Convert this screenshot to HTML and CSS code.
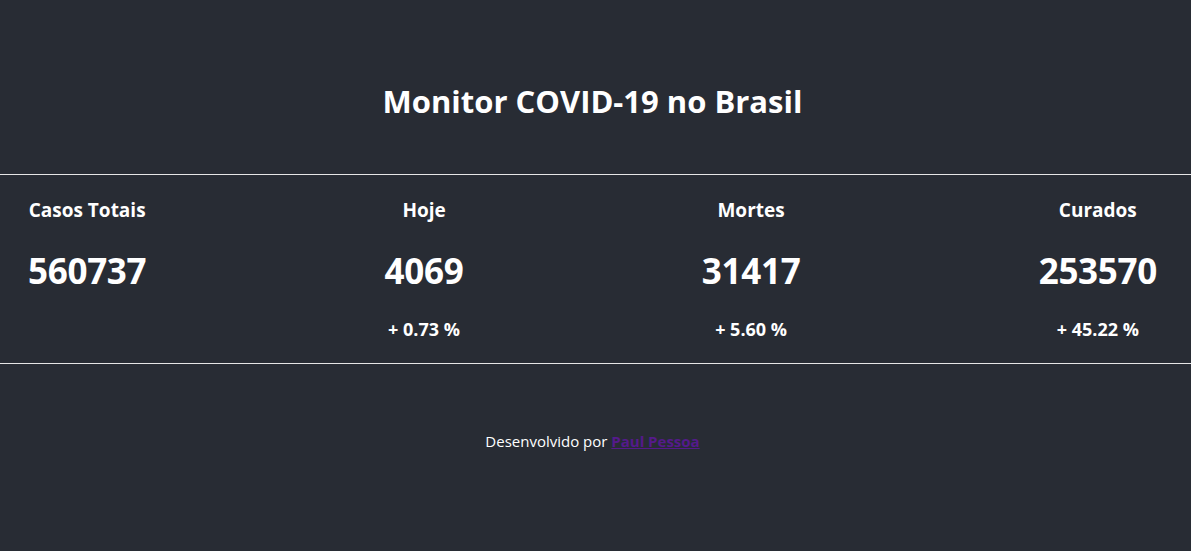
FILE: index.html
```html
<!DOCTYPE html>
<html lang="pt-BR">
<head>
<meta charset="utf-8">
<title>Monitor COVID-19 no Brasil</title>
<link rel="stylesheet" href="styles.css">
</head>
<body>
<div class="app">
  <header class="header">
    <h1 class="title">Monitor COVID-19 no Brasil</h1>
  </header>
  <div class="rule"></div>
  <section class="stats">
    <div class="stat">
      <h3 class="stat-label">Casos Totais</h3>
      <div class="stat-value">560737</div>
    </div>
    <div class="stat">
      <h3 class="stat-label">Hoje</h3>
      <div class="stat-value">4069</div>
      <div class="stat-pct">+ 0.73 %</div>
    </div>
    <div class="stat">
      <h3 class="stat-label">Mortes</h3>
      <div class="stat-value">31417</div>
      <div class="stat-pct">+ 5.60 %</div>
    </div>
    <div class="stat">
      <h3 class="stat-label">Curados</h3>
      <div class="stat-value">253570</div>
      <div class="stat-pct">+ 45.22 %</div>
    </div>
  </section>
  <div class="rule"></div>
  <footer class="footer">
    <p>Desenvolvido por <a href="#" class="link">Paul Pessoa</a></p>
  </footer>
</div>
</body>
</html>
```

FILE: styles.css
```css
html, body {
  margin: 0;
  padding: 0;
  background: #282c34;
  color: #ffffff;
  font-family: "Open Sans", "Noto Sans", sans-serif;
}

.app {
  min-height: 551px;
  display: flex;
  flex-direction: column;
}

.header {
  padding: 80px 6px 51px 0;
  text-align: center;
}

.title {
  margin: 0;
  font-size: 31px;
  line-height: 43px;
  font-weight: 700;
  letter-spacing: 0;
}

.rule {
  height: 1px;
  background: #e6e6e6;
}

.stats {
  display: flex;
  justify-content: space-between;
  align-items: flex-start;
  padding: 21px 34px 22px 28px;
}

.stat {
  display: flex;
  flex-direction: column;
  align-items: center;
  text-align: center;
}

.stat-label {
  margin: 0;
  font-size: 19px;
  line-height: 28px;
  font-weight: 700;
  letter-spacing: 0;
}

.stat-value {
  margin-top: 23px;
  font-size: 35px;
  line-height: 48px;
  font-weight: 700;
  letter-spacing: -0.3px;
}

.stat-pct {
  margin-top: 22px;
  font-size: 18px;
  line-height: 24px;
  font-weight: 700;
  letter-spacing: 0;
}

.footer {
  padding: 66px 6px 0 0;
  text-align: center;
}

.footer p {
  margin: 0;
  font-size: 15px;
  line-height: 22px;
  letter-spacing: 0;
}

.link {
  color: #551a8b;
  font-weight: 700;
}
```
